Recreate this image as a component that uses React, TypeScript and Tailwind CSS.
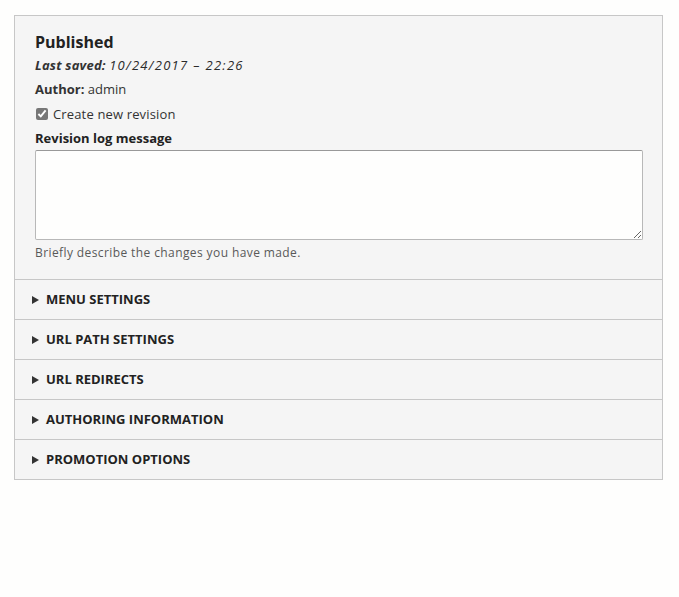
import { useState } from 'react';

const sections = ['Menu settings', 'URL path settings', 'URL redirects', 'Authoring information', 'Promotion options'];

export default function App() {
  const [revision, setRevision] = useState(true);
  const [log, setLog] = useState('');

  return (
    <main
      className="min-h-[597px] bg-[#fefefd] pt-[15px] pl-[14px] text-[#333]"
      style={{ fontFamily: '"Open Sans", "Noto Sans", sans-serif' }}
    >
      <div className="w-[649px] border border-[#c7c7c7] bg-[#f5f5f5]">
        {/* status */}
        <div className="px-5 pt-[15px] pb-[18px]">
          <h3 className="text-[16px] font-bold leading-[22px] text-[#222]">Published</h3>
          <p className="mt-[3px] text-[13px] italic leading-[18px]">
            <span className="font-bold tracking-[0.2px]">Last saved:</span>{' '}
            <span className="tracking-[1.3px] text-[#2a2a2a]">10/24/2017 – 22:26</span>
          </p>
          <p className="mt-[6px] text-[13px] leading-[18px]">
            <span className="font-bold">Author:</span> admin
          </p>
          <label className="mt-[7px] flex items-center gap-[5px] text-[13px] leading-[18px] tracking-[0.15px]">
            <input
              type="checkbox"
              checked={revision}
              onChange={(e) => setRevision(e.target.checked)}
              className="m-0 ml-[1px] h-[12px] w-[12px] accent-[#777]"
            />
            Create new revision
          </label>
          <label htmlFor="log" className="mt-[6px] block text-[13px] font-bold leading-[18px] text-[#222]">
            Revision log message
          </label>
          <textarea
            id="log"
            value={log}
            onChange={(e) => setLog(e.target.value)}
            className="mt-[3px] block h-[90px] w-[608px] rounded-[2px] border border-[#b8b8b8] border-t-[#999] bg-[#fefefd] px-2 py-1 text-[13px] focus:outline-none"
          />
          <p className="mt-[5px] text-[12px] leading-[16px] tracking-[0.4px] text-[#595959]">
            Briefly describe the changes you have made.
          </p>
        </div>

        {/* collapsed details */}
        {sections.map((s) => (
          <div key={s} className="flex h-[40px] items-center border-t border-[#c7c7c7] pl-[17px]">
            <svg width="7" height="8" viewBox="0 0 7 8" className="mr-[7px] shrink-0">
              <path d="M0 0 L7 4 L0 8 Z" fill="#333" />
            </svg>
            <span className="text-[13px] font-bold uppercase leading-none text-[#222]">{s}</span>
          </div>
        ))}
      </div>
    </main>
  );
}
